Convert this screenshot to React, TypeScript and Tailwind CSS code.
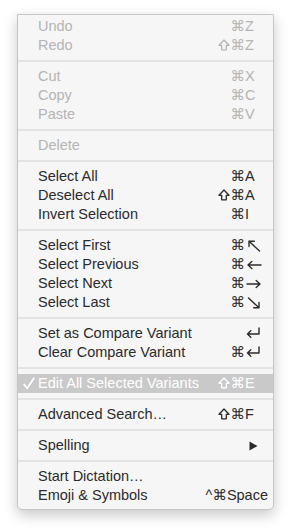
import React from "react";

type Item =
  | { type: "sep" }
  | {
      type: "item";
      label: string;
      mods?: string;
      keyText?: string;
      disabled?: boolean;
      checked?: boolean;
      highlighted?: boolean;
      submenu?: boolean;
      wide?: boolean;
    };

const items: Item[] = [
  { type: "item", label: "Undo", mods: "⌘", keyText: "Z", disabled: true },
  { type: "item", label: "Redo", mods: "⇧⌘", keyText: "Z", disabled: true },
  { type: "sep" },
  { type: "item", label: "Cut", mods: "⌘", keyText: "X", disabled: true },
  { type: "item", label: "Copy", mods: "⌘", keyText: "C", disabled: true },
  { type: "item", label: "Paste", mods: "⌘", keyText: "V", disabled: true },
  { type: "sep" },
  { type: "item", label: "Delete", disabled: true },
  { type: "sep" },
  { type: "item", label: "Select All", mods: "⌘", keyText: "A" },
  { type: "item", label: "Deselect All", mods: "⇧⌘", keyText: "A" },
  { type: "item", label: "Invert Selection", mods: "⌘", keyText: "I" },
  { type: "sep" },
  { type: "item", label: "Select First", mods: "⌘", keyText: "home" },
  { type: "item", label: "Select Previous", mods: "⌘", keyText: "left" },
  { type: "item", label: "Select Next", mods: "⌘", keyText: "right" },
  { type: "item", label: "Select Last", mods: "⌘", keyText: "end" },
  { type: "sep" },
  { type: "item", label: "Set as Compare Variant", mods: "", keyText: "return" },
  { type: "item", label: "Clear Compare Variant", mods: "⌘", keyText: "return" },
  { type: "sep" },
  {
    type: "item",
    label: "Edit All Selected Variants",
    mods: "⇧⌘",
    keyText: "E",
    checked: true,
    highlighted: true,
  },
  { type: "sep" },
  { type: "item", label: "Advanced Search…", mods: "⇧⌘", keyText: "F" },
  { type: "sep" },
  { type: "item", label: "Spelling", submenu: true },
  { type: "sep" },
  { type: "item", label: "Start Dictation…" },
  { type: "item", label: "Emoji & Symbols", wide: true },
];

function Shift() {
  return (
    <svg width="12" height="12" viewBox="0 0 12 12" className="inline-block mr-[1px] -mt-[2px] align-middle">
      <path
        d="M6 1 L11 6.3 H8.3 V10.8 H3.7 V6.3 H1 Z"
        fill="none"
        stroke="currentColor"
        strokeWidth="1.3"
        strokeLinejoin="round"
      />
    </svg>
  );
}

function Cmd() {
  return <span>⌘</span>;
}

function Mods({ m }: { m: string }) {
  return (
    <span className="whitespace-nowrap text-right inline-flex items-center">
      {m.split("").map((c, i) =>
        c === "⇧" ? <Shift key={i} /> : <Cmd key={i} />
      )}
    </span>
  );
}

function KeyGlyph({ k }: { k: string }) {
  const common = {
    fill: "none",
    stroke: "currentColor",
    strokeWidth: 1.4,
    strokeLinecap: "round" as const,
    strokeLinejoin: "round" as const,
  };
  if (k === "home")
    return (
      <svg width="16" height="12" viewBox="0 0 16 12" className="ml-[1px]">
        <path d="M13.5 11 L3 1.2 M3 1.2 L3 6.5 M3 1.2 L8.3 1.2" {...common} />
      </svg>
    );
  if (k === "end")
    return (
      <svg width="16" height="12" viewBox="0 0 16 12" className="ml-[1px]">
        <path d="M2.5 1 L13 10.8 M13 10.8 L13 5.5 M13 10.8 L7.7 10.8" {...common} />
      </svg>
    );
  if (k === "left")
    return (
      <svg width="16" height="12" viewBox="0 0 16 12" className="ml-[1px]">
        <path d="M15 6 L2 6 M2 6 L5.8 2.5 M2 6 L5.8 9.5" {...common} />
      </svg>
    );
  if (k === "right")
    return (
      <svg width="16" height="12" viewBox="0 0 16 12" className="ml-[1px]">
        <path d="M1 6 L14 6 M14 6 L10.2 2.5 M14 6 L10.2 9.5" {...common} />
      </svg>
    );
  if (k === "return")
    return (
      <svg width="16" height="12" viewBox="0 0 16 12" className="-mt-[2px]">
        <path d="M14 1 L14 7 L2.5 7 M2.5 7 L5.8 3.8 M2.5 7 L5.8 10.2" {...common} />
      </svg>
    );
  return <span>{k}</span>;
}

export default function App() {
  return (
    <div className="w-[291px] h-[530px] bg-white pt-[14px] pl-[17px]">
      <div
        className="w-[257px] bg-[#f6f6f6] border border-[#c6c6c6] rounded-b-[5px] shadow-[0_5px_14px_rgba(0,0,0,0.22)] pt-[2px] pb-[4px] text-[14.5px] leading-[19px]"
        style={{ fontFamily: '"Liberation Sans", Arial, "DejaVu Sans", sans-serif' }}
      >
        {items.map((it, i) => {
          if (it.type === "sep") {
            return (
              <div key={i} className="h-[12px] flex items-center">
                <div className="w-full h-[2px] bg-[#e3e3e3]" />
              </div>
            );
          }
          const color = it.highlighted
            ? "text-white"
            : it.disabled
            ? "text-[#b4b4b4]"
            : "text-[#2b2b2b]";
          return (
            <div
              key={i}
              className={`relative h-[19px] flex items-center pl-[20px] pr-[11px] ${color} ${
                it.highlighted ? "bg-[#c9c9c9]" : ""
              }`}
            >
              {it.checked && (
                <svg
                  width="12"
                  height="13"
                  viewBox="0 0 12 13"
                  className="absolute left-[5px] top-[3px]"
                >
                  <path
                    d="M1.2 7.5 L4.2 11.5 L10.8 1.2"
                    fill="none"
                    stroke="currentColor"
                    strokeWidth="1.8"
                    strokeLinecap="round"
                    strokeLinejoin="round"
                  />
                </svg>
              )}
              <span className="flex-1 whitespace-nowrap">{it.label}</span>
              {it.wide ? (
                <span className="whitespace-nowrap -mr-[6px]">
                  ^<Cmd />Space
                </span>
              ) : it.submenu ? (
                <span className="w-[16px] flex justify-start">
                  <svg width="9" height="10" viewBox="0 0 9 10" className="ml-[3px]">
                    <path d="M0.5 0.5 L8.5 5 L0.5 9.5 Z" fill="#2b2b2b" />
                  </svg>
                </span>
              ) : it.keyText !== undefined ? (
                <>
                  <Mods m={it.mods ?? ""} />
                  <span className="w-[17px] whitespace-nowrap flex items-center">
                    <KeyGlyph k={it.keyText} />
                  </span>
                </>
              ) : null}
            </div>
          );
        })}
      </div>
    </div>
  );
}
